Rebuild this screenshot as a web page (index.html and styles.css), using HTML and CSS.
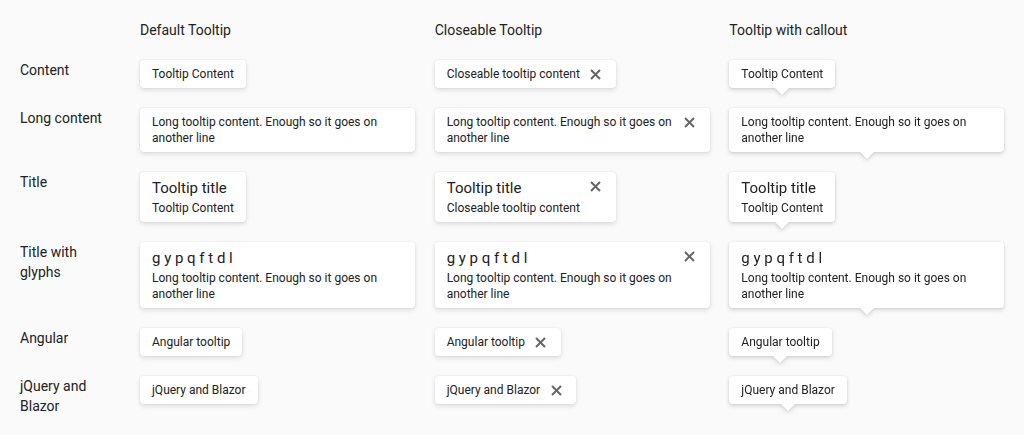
FILE: index.html
```html
<!DOCTYPE html>
<html lang="en">
<head>
<meta charset="utf-8">
<title>Tooltips</title>
<link rel="stylesheet" href="styles.css">
</head>
<body>
<div class="grid">
  <div></div>
  <div class="head">Default Tooltip</div>
  <div class="head">Closeable Tooltip</div>
  <div class="head">Tooltip with callout</div>

  <div class="label">Content</div>
  <div class="tip">Tooltip Content</div>
  <div class="tip tip-close"><div class="body">Closeable tooltip content</div><button class="close" aria-label="Close"><svg viewBox="0 0 11 11" width="11" height="11"><path d="M1 1L10 10M10 1L1 10"/></svg></button></div>
  <div class="tip callout">Tooltip Content</div>

  <div class="label">Long content</div>
  <div class="tip">Long tooltip content. Enough so it goes on another line</div>
  <div class="tip tip-close"><div class="body">Long tooltip content. Enough so it goes on another line</div><button class="close" aria-label="Close"><svg viewBox="0 0 11 11" width="11" height="11"><path d="M1 1L10 10M10 1L1 10"/></svg></button></div>
  <div class="tip callout">Long tooltip content. Enough so it goes on another line</div>

  <div class="label">Title</div>
  <div class="tip"><div class="title">Tooltip title</div>Tooltip Content</div>
  <div class="tip tip-close"><div class="body"><div class="title">Tooltip title</div>Closeable tooltip content</div><button class="close" aria-label="Close"><svg viewBox="0 0 11 11" width="11" height="11"><path d="M1 1L10 10M10 1L1 10"/></svg></button></div>
  <div class="tip callout"><div class="title">Tooltip title</div>Tooltip Content</div>

  <div class="label">Title with glyphs</div>
  <div class="tip"><div class="title">g y p q f t d l</div>Long tooltip content. Enough so it goes on another line</div>
  <div class="tip tip-close"><div class="body"><div class="title">g y p q f t d l</div>Long tooltip content. Enough so it goes on another line</div><button class="close" aria-label="Close"><svg viewBox="0 0 11 11" width="11" height="11"><path d="M1 1L10 10M10 1L1 10"/></svg></button></div>
  <div class="tip callout"><div class="title">g y p q f t d l</div>Long tooltip content. Enough so it goes on another line</div>

  <div class="label">Angular</div>
  <div class="tip">Angular tooltip</div>
  <div class="tip tip-close"><div class="body">Angular tooltip</div><button class="close" aria-label="Close"><svg viewBox="0 0 11 11" width="11" height="11"><path d="M1 1L10 10M10 1L1 10"/></svg></button></div>
  <div class="tip callout">Angular tooltip</div>

  <div class="label">jQuery and Blazor</div>
  <div class="tip">jQuery and Blazor</div>
  <div class="tip tip-close"><div class="body">jQuery and Blazor</div><button class="close" aria-label="Close"><svg viewBox="0 0 11 11" width="11" height="11"><path d="M1 1L10 10M10 1L1 10"/></svg></button></div>
  <div class="tip callout">jQuery and Blazor</div>
</div>
</body>
</html>
```

FILE: styles.css
```css
html, body {
  margin: 0;
  background: #fafafa;
}
body {
  font-family: Roboto, "Liberation Sans", sans-serif;
  color: #212121;
}
.grid {
  display: grid;
  grid-template-columns: 120px repeat(3, 1fr);
  row-gap: 20px;
  padding: 20px 0 20px 20px;
  align-items: start;
  justify-items: start;
}
.head, .label {
  font-size: 14px;
  line-height: 20px;
}
.label {
  width: 90px;
}
.tip {
  position: relative;
  box-sizing: border-box;
  max-width: 275px;
  background: #fff;
  border-radius: 4px;
  padding: 6px 12px;
  font-size: 12px;
  line-height: 16px;
  color: #212121;
  box-shadow: 0 2px 5px rgba(0, 0, 0, 0.13), 0 0 2px rgba(0, 0, 0, 0.07);
}
.title {
  font-size: 15px;
  line-height: 20px;
  margin-bottom: 2px;
}
.tip-close {
  display: flex;
  align-items: flex-start;
}
.tip-close .body {
  flex: 1 1 auto;
  min-width: 0;
}
.close {
  flex: none;
  width: 16px;
  height: 16px;
  margin: 0 0 0 8px;
  padding: 0;
  border: 0;
  background: none;
  display: flex;
  align-items: center;
  justify-content: center;
}
.close svg {
  fill: none;
  stroke: #666;
  stroke-width: 2;
}
.callout {
  box-shadow: none;
  filter: drop-shadow(0 2px 2px rgba(0, 0, 0, 0.14)) drop-shadow(0 0 1px rgba(0, 0, 0, 0.08));
}
.callout::after {
  content: "";
  position: absolute;
  top: 100%;
  left: 50%;
  margin-left: -7px;
  border-left: 7px solid transparent;
  border-right: 7px solid transparent;
  border-top: 7px solid #fff;
}
```
